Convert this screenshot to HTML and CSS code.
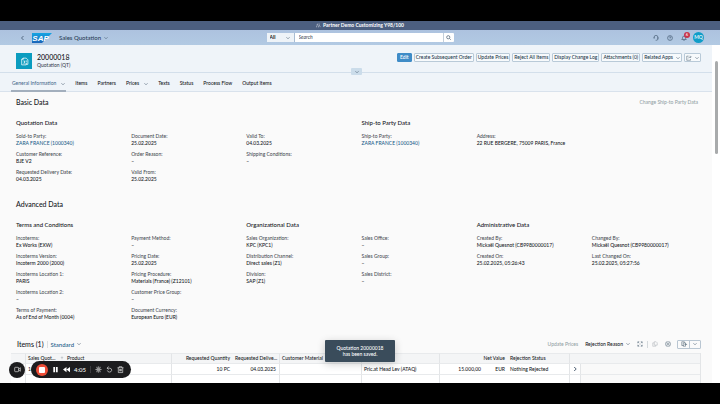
FILE: index.html
```
<!DOCTYPE html>
<html lang="en">
<head>
<meta charset="utf-8">
<meta name="viewport" content="width=device-width, initial-scale=1">
<title>Sales Quotation 20000018</title>
<link rel="stylesheet" href="styles.css">
</head>
<body>
<svg class="sprite" aria-hidden="true">
  <symbol id="chev" viewBox="0 0 10 10"><path d="M1 3l4 4 4-4"/></symbol>
</svg>
<div class="frame">
  <div class="banner">
    <svg class="ico light" viewBox="0 0 16 16"><path d="M2 14V9l3-2V3M8 14V8M5 3h3M10 6l4 7M11 2v3M2 5h1"/></svg>
    <span>Partner Demo Customizing Y98/100</span>
  </div>

  <header class="shell">
    <div class="shell-left">
      <button class="bare" aria-label="Back"><svg class="ico dark" viewBox="0 0 10 10"><path d="M7 1L3 5l4 4"/></svg></button>
      <svg class="logo" viewBox="0 0 60 30" role="img" aria-label="SAP">
        <defs><linearGradient id="g" x1="0" y1="0" x2="0" y2="1"><stop offset="0" stop-color="#14a5e3"/><stop offset="1" stop-color="#1b63b8"/></linearGradient></defs>
        <path d="M0 0h60L30 30H0z" fill="url(#g)"/>
        <text x="1" y="24" class="logo-text">SAP</text>
      </svg>
      <button class="bare app-title">Sales Quotation <svg class="ico" viewBox="0 0 10 10"><use href="#chev"/></svg></button>
    </div>
    <form class="search">
      <label class="scope"><select aria-label="Search scope"><option>All</option></select><svg class="ico" viewBox="0 0 10 10"><use href="#chev"/></svg></label>
      <input type="text" placeholder="Search" aria-label="Search">
      <button type="button" class="bare find" aria-label="Run search"><svg class="ico" viewBox="0 0 10 10"><circle cx="4.500" cy="4.500" r="3.200"/><path d="M7 7l2.500 2.500"/></svg></button>
    </form>
    <div class="shell-right">
      <button class="bare" aria-label="Support"><svg class="ico dark" viewBox="0 0 16 16"><path d="M3 8V6a5 5 0 0 1 10 0v5q0 3-4 3M3 6v4M13 6v4M7 14h2"/></svg></button>
      <button class="bare" aria-label="Help"><svg class="ico dark" viewBox="0 0 16 16"><circle cx="8" cy="8" r="6.500"/><path d="M6 6.500q0-2 2-2t2 2q0 1-2 2v1M8 11v1"/></svg></button>
      <button class="bare bell" aria-label="Notifications"><svg class="ico dark" viewBox="0 0 16 16"><path d="M2 12q2-1 2-5 0-4 4-4t4 4q0 4 2 5zM6 14h4"/></svg><span class="badge">6</span></button>
      <button class="bare avatar">MQ</button>
    </div>
  </header>

  <div class="view">
    <main>
      <section class="object">
        <div class="object-icon"><svg class="ico light" viewBox="0 0 16 16"><path d="M6 4V2h5l3 3v8h-3M6 4H3v10h8v-3M3 4l3-2M6 7h2v4H6M11 6v3M10 11h2"/></svg></div>
        <div class="object-title"><h1>20000018</h1><p>Quotation (QT)</p></div>
        <div class="actions">
          <button class="btn primary">Edit</button>
          <button class="btn">Create Subsequent Order</button>
          <button class="btn">Update Prices</button>
          <button class="btn">Reject All Items</button>
          <button class="btn">Display Change Log</button>
          <button class="btn">Attachments (0)</button>
          <button class="btn">Related Apps <svg class="ico" viewBox="0 0 10 10"><use href="#chev"/></svg></button>
          <button class="btn" aria-label="Share"><svg class="ico big" viewBox="0 0 16 16"><path d="M7 3H2v11h10v-3M6 9q1-4 7-4M11 2l3 3-3 3"/></svg><svg class="ico" viewBox="0 0 10 10"><use href="#chev"/></svg></button>
        </div>
        <button class="collapse" aria-label="Expand header"><svg class="ico" viewBox="0 0 10 10"><use href="#chev"/></svg></button>
      </section>

      <nav class="tabs">
        <a href="#general" class="active">General Information <svg class="ico" viewBox="0 0 10 10"><use href="#chev"/></svg></a>
        <a href="#items">Items</a>
        <a href="#partners">Partners</a>
        <a href="#prices">Prices <svg class="ico" viewBox="0 0 10 10"><use href="#chev"/></svg></a>
        <a href="#texts">Texts</a>
        <a href="#status">Status</a>
        <a href="#flow">Process Flow</a>
        <a href="#output">Output Items</a>
      </nav>

      <section class="block" id="general">
        <div class="block-head"><h2>Basic Data</h2><button class="bare muted" disabled>Change Ship-to Party Data</button></div>
        <div class="groups">
          <div class="group span3">
            <h3>Quotation Data</h3>
            <dl class="fields">
              <div><dt>Sold-to Party:</dt><dd><a href="#party">ZARA FRANCE (1000340)</a></dd></div>
              <div><dt>Document Date:</dt><dd>25.02.2025</dd></div>
              <div><dt>Valid To:</dt><dd>04.03.2025</dd></div>
              <div><dt>Customer Reference:</dt><dd>BJE V2</dd></div>
              <div><dt>Order Reason:</dt><dd>–</dd></div>
              <div><dt>Shipping Conditions:</dt><dd>–</dd></div>
              <div><dt>Requested Delivery Date:</dt><dd>04.03.2025</dd></div>
              <div><dt>Valid From:</dt><dd>25.02.2025</dd></div>
            </dl>
          </div>
          <div class="group span3">
            <h3>Ship-to Party Data</h3>
            <dl class="fields">
              <div><dt>Ship-to Party:</dt><dd><a href="#party">ZARA FRANCE (1000340)</a></dd></div>
              <div><dt>Address:</dt><dd>22 RUE BERGERE, 75009 PARIS, France</dd></div>
            </dl>
          </div>
        </div>
      </section>

      <section class="block">
        <div class="block-head"><h2>Advanced Data</h2></div>
        <div class="groups">
          <div class="group span2">
            <h3>Terms and Conditions</h3>
            <dl class="fields">
              <div><dt>Incoterms:</dt><dd>Ex Works (EXW)</dd></div>
              <div><dt>Payment Method:</dt><dd>–</dd></div>
              <div><dt>Incoterms Version:</dt><dd>Incoterm 2000 (2000)</dd></div>
              <div><dt>Pricing Date:</dt><dd>25.02.2025</dd></div>
              <div><dt>Incoterms Location 1:</dt><dd>PARIS</dd></div>
              <div><dt>Pricing Procedure:</dt><dd>Materials (France) (Z12101)</dd></div>
              <div><dt>Incoterms Location 2:</dt><dd>–</dd></div>
              <div><dt>Customer Price Group:</dt><dd>–</dd></div>
              <div><dt>Terms of Payment:</dt><dd>As of End of Month (0004)</dd></div>
              <div><dt>Document Currency:</dt><dd>European Euro (EUR)</dd></div>
            </dl>
          </div>
          <div class="group span2">
            <h3>Organizational Data</h3>
            <dl class="fields">
              <div><dt>Sales Organization:</dt><dd>KPC (KPC1)</dd></div>
              <div><dt>Sales Office:</dt><dd>–</dd></div>
              <div><dt>Distribution Channel:</dt><dd>Direct sales (Z1)</dd></div>
              <div><dt>Sales Group:</dt><dd>–</dd></div>
              <div><dt>Division:</dt><dd>SAP (Z1)</dd></div>
              <div><dt>Sales District:</dt><dd>–</dd></div>
            </dl>
          </div>
          <div class="group span2">
            <h3>Administrative Data</h3>
            <dl class="fields">
              <div><dt>Created By:</dt><dd>Mickaël Quesnot (CB9980000017)</dd></div>
              <div><dt>Changed By:</dt><dd>Mickaël Quesnot (CB9980000017)</dd></div>
              <div><dt>Created On:</dt><dd>25.02.2025, 05:26:43</dd></div>
              <div><dt>Last Changed On:</dt><dd>25.02.2025, 05:27:56</dd></div>
            </dl>
          </div>
        </div>
      </section>

      <section class="items" id="items">
        <div class="toolbar">
          <h2>Items (1)</h2>
          <button class="bare variant">Standard <svg class="ico" viewBox="0 0 10 10"><use href="#chev"/></svg></button>
          <div class="tools">
            <button class="bare muted" disabled>Update Prices</button>
            <button class="bare">Rejection Reason <svg class="ico" viewBox="0 0 10 10"><use href="#chev"/></svg></button>
            <button class="bare" aria-label="Full screen"><svg class="ico big" viewBox="0 0 16 16"><path d="M2 6V2h4M10 2h4v4M14 10v4h-4M6 14H2v-4M6 6L3 3M10 6l3-3M10 10l3 3M6 10l-3 3"/></svg></button>
            <span class="rule"></span>
            <button class="bare" aria-label="Copy"><svg class="ico big faint" viewBox="0 0 16 16"><path d="M6 2h5l3 3v6H6zM6 5H2v9h8v-3"/></svg></button>
            <button class="bare" aria-label="Settings"><svg class="ico big" viewBox="0 0 16 16"><path d="M8 1l2 2 3-.5.500 3L15 8l-1.500 2.500-.5 3-3-.5-2 2-2-2-3 .5-.5-3L1 8l1.500-2.500.5-3 3 .5z"/><circle cx="8" cy="8" r="2.500"/></svg></button>
            <div class="split">
              <button class="bare" aria-label="Export"><svg class="ico big" viewBox="0 0 16 16"><path d="M9 5V2H2v10h5M6 5h6v9H6zM9 9h6M13 7l2 2-2 2"/></svg></button>
              <button class="bare" aria-label="Export options"><svg class="ico" viewBox="0 0 10 10"><use href="#chev"/></svg></button>
            </div>
          </div>
        </div>
        <table>
          <colgroup><col class="c-sel"><col class="c-quot"><col class="c-prod"><col class="c-qty"><col class="c-date"><col class="c-mat"><col class="c-price"><col class="c-net"><col class="c-cur"><col class="c-rej"><col class="c-nav"><col></colgroup>
          <thead>
            <tr><th class="line"></th><th>Sales Quot…<svg class="ico faint sort" viewBox="0 0 10 10"><path d="M5 2v6M2 5l3-3 3 3"/></svg></th><th class="line">Product</th><th class="num">Requested Quantity</th><th class="num line">Requested Delive…</th><th class="line">Customer Material</th><th class="line"></th><th class="num" colspan="2">Net Value</th><th class="line">Rejection Status</th><th></th><th></th></tr>
          </thead>
          <tbody>
            <tr><td class="line"></td><td>10</td><td class="line"></td><td class="num">10 PC</td><td class="num line">04.03.2025</td><td class="line"></td><td class="line">Pric.at Head Lev (ATAQ)</td><td class="num">15.000,00</td><td class="num">EUR</td><td class="line">Nothing Rejected</td><td class="line nav"><svg class="ico dark bold" viewBox="0 0 10 10"><path d="M3 0l5 5-5 5"/></svg></td><td class="rest"></td></tr>
            <tr><td class="line"></td><td></td><td class="line"></td><td></td><td class="line"></td><td class="line"></td><td class="line"></td><td></td><td></td><td class="line"></td><td class="line"></td><td class="rest"></td></tr>
          </tbody>
        </table>
      </section>
    </main>
    <div class="gutter"><div class="thumb"></div></div>
  </div>

  <div class="toast" role="status">Quotation 20000018 has been saved.</div>

  <div class="recorder">
    <button class="bare camera" aria-label="Camera"><svg class="ico light" viewBox="0 0 16 16"><rect x="1.500" y="3" width="9" height="10" rx="1.500"/><path d="M10.500 7l4-3v8l-4-3"/></svg></button>
    <div class="pill">
      <button class="bare stop" aria-label="Stop"><span></span></button>
      <button class="bare" aria-label="Pause"><svg class="solid" viewBox="0 0 16 16"><path d="M3 2h4v12H3zM9 2h4v12H9z"/></svg></button>
      <button class="bare" aria-label="Rewind"><svg class="solid" viewBox="0 0 16 16"><path d="M8 2v12L0 8zM16 2v12L8 8z"/></svg></button>
      <time>4:05</time>
      <span class="rule"></span>
      <button class="bare" aria-label="Effects"><svg class="ico light" viewBox="0 0 16 16"><path d="M1 8h14M8 1v3M8 12v3M3 3h3M10 3h3M3 13h3M10 13h3M4 5.500h8M4 10.500h8"/></svg></button>
      <button class="bare" aria-label="Restart"><svg class="ico light" viewBox="0 0 16 16"><path d="M3 5h6a5 4.500 0 1 1-6 5M6 1L2.500 5 6 8"/></svg></button>
      <button class="bare" aria-label="Delete"><svg class="ico light" viewBox="0 0 16 16"><path d="M1 4h14M5 4V1.500h6V4M3 4v11h10V4M6 7v5M8 7v5M10 7v5"/></svg></button>
    </div>
  </div>
</div>
</body>
</html>
```
FILE: styles.css
```
* { box-sizing: border-box; }
html { background: #000; }
body {
  margin: 0;
  padding: 21px 0;
  background: #000;
  color: #15181c;
  font: 500 5px/7px Lato, "Open Sans", sans-serif;
}
h1, h2, h3, p, dl, dd { margin: 0; font-weight: 500; }
a { color: inherit; text-decoration: none; }
button, input, select { font: inherit; color: inherit; }
.sprite { display: none; }
.frame { position: relative; background: #fafafa; }
.bare {
  display: flex;
  align-items: center;
  gap: 3px;
  padding: 0;
  border: 0;
  background: none;
}
.ico {
  flex: none;
  width: 4px;
  height: 4px;
  overflow: visible;
  fill: none;
  stroke: #3f5468;
  stroke-width: 1.3;
}
.ico.big { width: 6px; height: 6px; }
.ico.dark { stroke: #22374f; }
.ico.light { stroke: #fff; }
.ico.faint { stroke: #a5acb3; }
.ico.bold { stroke-width: 2; }
.solid { width: 6px; height: 6px; fill: #fff; }
.muted { color: #93a2a5; }

.banner {
  display: flex;
  align-items: center;
  justify-content: center;
  gap: 2px;
  height: 9px;
  background: #4c5f80;
  color: #fff;
  font-weight: 700;
}
.banner .ico { width: 5px; height: 5px; }

.shell {
  display: grid;
  grid-template-columns: 1fr 187px 1fr;
  align-items: center;
  height: 15px;
  padding: 0 16px;
  background: linear-gradient(#adc2df, #b2cae3);
}
.shell-left { display: flex; align-items: center; gap: 7px; padding-left: 4px; }
.shell-left > .bare:first-child .ico { width: 5px; height: 6px; }
.logo { width: 20px; height: 10px; }
.logo-text { font: italic 700 24px "Liberation Sans", sans-serif; fill: #fff; }
.app-title { color: #2b3f58; font-size: 6px; }
.search { display: flex; height: 9px; background: #fff; border-radius: 1px; }
.scope {
  display: flex;
  align-items: center;
  width: 28px;
  padding: 0 4px 0 3px;
  background: #eef3f8;
  border-right: 1px solid #a9bdd3;
  font-weight: 700;
}
.scope select { flex: 1; min-width: 0; padding: 0; border: 0; background: none; appearance: none; }
.search input { flex: 1; min-width: 0; padding: 0 4px; border: 0; background: none; outline: 0; }
.search input::placeholder { color: #4a5560; font-style: italic; opacity: 1; }
.find { width: 11px; justify-content: center; border-left: 1px solid #c3cfdb; }
.find .ico { width: 5px; height: 5px; }
.shell-right { display: flex; align-items: center; justify-content: flex-end; gap: 8px; }
.shell-right .ico { width: 6px; height: 6px; }
.bell { position: relative; }
.badge {
  position: absolute;
  top: -3px;
  right: -3px;
  width: 6px;
  height: 6px;
  border-radius: 50%;
  background: #c8354b;
  color: #fff;
  font-size: 4px;
  line-height: 6px;
}
.avatar {
  justify-content: center;
  width: 11px;
  height: 11px;
  margin-left: -2px;
  border-radius: 50%;
  background: #0f9dc8;
  color: #fff;
}

.view { display: flex; }
main { flex: 1; min-width: 0; }
.gutter { width: 8px; padding: 16px 2px 0 3px; background: #fff; }
.thumb { height: 93px; border-radius: 2px; background: #a9abac; }

.object {
  position: relative;
  display: flex;
  align-items: flex-start;
  padding: 8px 11px 3px 16px;
  background: #eff4f9;
  border-bottom: 1px solid #d3dfeb;
}
.object-icon {
  display: grid;
  place-items: center;
  width: 16px;
  height: 16px;
  margin-right: 5px;
  background: #0b9cbf;
}
.object-icon .ico { width: 9px; height: 9px; }
.object-title h1 { font-size: 7px; line-height: 9px; }
.object-title p { color: #3b4650; }
.actions { display: flex; gap: 2px; margin-left: auto; }
.btn {
  display: flex;
  align-items: center;
  gap: 3px;
  height: 9px;
  padding: 0 1px;
  border: 1px solid #b9cad8;
  border-radius: 1px;
  background: #f7fafc;
  color: #24384a;
  white-space: nowrap;
}
.btn.primary { padding: 0 2px; border-color: #3f8cc7; background: #3f8cc7; color: #fff; }
.collapse {
  position: absolute;
  left: 50%;
  bottom: -3px;
  display: grid;
  place-items: center;
  width: 11px;
  height: 7px;
  margin-left: -5px;
  padding: 0;
  border: 0;
  border-radius: 1px;
  background: #cbdcea;
}

.tabs {
  display: flex;
  gap: 8px;
  padding: 0 11px;
  height: 19px;
  background: #eff4f9;
  border-bottom: 1px solid #d9e2ec;
}
.tabs a { display: flex; align-items: center; gap: 5px; padding: 2px 1px 0; height: 19px; }
.tabs .active { border-bottom: 2px solid #a3afbd; padding-top: 4px; color: #4b6c8e; }

.block { padding: 6px 0 0 16px; }
.block-head { display: flex; justify-content: space-between; align-items: center; padding-right: 14px; }
h2 { font-size: 7px; line-height: 9px; }
h3 { font-size: 6px; line-height: 8px; }
.groups { display: grid; grid-template-columns: repeat(6, 1fr); padding: 12px 5px 0 0; }
.span3 { grid-column: span 3; }
.span2 { grid-column: span 2; }
.fields { display: grid; grid-template-columns: repeat(3, 1fr); row-gap: 4px; padding-top: 6px; white-space: nowrap; }
.span2 .fields { grid-template-columns: repeat(2, 1fr); }
dt { color: #4a4f55; }
dd a { color: #23618a; }
.block + .block { padding-top: 17px; }

.items { height: 62px; padding: 14px 11px 0; overflow: hidden; }
.toolbar { display: flex; align-items: center; height: 18px; padding-left: 6px; }
.variant { margin-left: 3px; padding-left: 3px; border-left: 1px solid #dcdfe2; color: #23618a; font-size: 6px; }
.tools { display: flex; align-items: center; gap: 7px; margin-left: auto; }
.rule { width: 1px; height: 7px; background: #d5d9dc; }
.tools .rule { margin: 0 -3px; }
.split { display: flex; height: 9px; margin-left: -1px; border: 1px solid #b9c6d2; border-radius: 1px; }
.split .bare { justify-content: center; width: 11px; }
.split .bare + .bare { border-left: 1px solid #b9c6d2; }
table { width: 100%; table-layout: fixed; border-collapse: separate; border-spacing: 0; border-right: 1px solid #e3e5e7; }
th, td { height: 11px; padding: 0 3px 0 2px; border-bottom: 1px solid #e8eaec; font-weight: 500; text-align: left; white-space: nowrap; }
th { background: #f4f5f6; border-top: 1px solid #e8eaec; }
td { background: #fff; }
.line { border-right: 1px solid #e3e5e7; }
.num { text-align: right; }
.rest { background: #f9f9f9; }
.nav { text-align: center; }
.sort { margin-left: 4px; }
.c-sel { width: 15px; }
.c-quot { width: 39px; }
.c-prod { width: 107px; }
.c-qty { width: 61px; }
.c-date { width: 47px; }
.c-mat { width: 82px; }
.c-price { width: 78px; }
.c-net { width: 44px; }
.c-cur { width: 24px; }
.c-rej { width: 62px; }
.c-nav { width: 11px; }

.toast {
  position: absolute;
  left: 50%;
  bottom: 21px;
  width: 70px;
  margin-left: -35px;
  padding: 5px 8px;
  border-radius: 1px;
  background: #3a4c5b;
  box-shadow: 0 2px 8px rgba(0, 0, 0, .2);
  color: #fff;
  line-height: 6px;
  text-align: center;
}
.recorder { position: absolute; left: 9px; bottom: 5px; display: flex; gap: 6px; align-items: center; }
.recorder .ico, .recorder .solid { width: 7px; height: 7px; }
.camera { justify-content: center; width: 16px; height: 16px; border-radius: 50%; background: #1c1c1e; }
.pill {
  display: flex;
  align-items: center;
  gap: 4px;
  height: 17px;
  padding: 0 7px 0 5px;
  border-radius: 9px;
  background: #1c1c1e;
  color: #fff;
}
.pill time { font-size: 6px; }
.pill .rule { background: #3c3c3f; }
.stop { justify-content: center; width: 12px; height: 12px; border-radius: 50%; background: #ee4d37; }
.stop span { width: 6px; height: 6px; border-radius: 1px; background: #fff; }
```
